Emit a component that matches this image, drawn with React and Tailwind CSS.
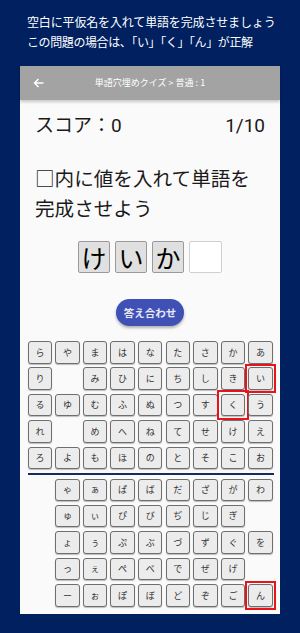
import React from 'react'

const group1 = [
  ['ら', 'や', 'ま', 'は', 'な', 'た', 'さ', 'か', 'あ'],
  ['り', '', 'み', 'ひ', 'に', 'ち', 'し', 'き', 'い'],
  ['る', 'ゆ', 'む', 'ふ', 'ぬ', 'つ', 'す', 'く', 'う'],
  ['れ', '', 'め', 'へ', 'ね', 'て', 'せ', 'け', 'え'],
  ['ろ', 'よ', 'も', 'ほ', 'の', 'と', 'そ', 'こ', 'お'],
]

const group2 = [
  ['', 'ゃ', 'ぁ', 'ぱ', 'ば', 'だ', 'ざ', 'が', 'わ'],
  ['', 'ゅ', 'ぃ', 'ぴ', 'び', 'ぢ', 'じ', 'ぎ', ''],
  ['', 'ょ', 'ぅ', 'ぷ', 'ぶ', 'づ', 'ず', 'ぐ', 'を'],
  ['', 'っ', 'ぇ', 'ぺ', 'べ', 'で', 'ぜ', 'げ', ''],
  ['', 'ー', 'ぉ', 'ぽ', 'ぼ', 'ど', 'ぞ', 'ご', 'ん'],
]

// answers get the red frame
const answers = ['い', 'く', 'ん']

const Key = ({ label }) => {
  if (!label) return <div />
  const marked = answers.includes(label)
  return (
    <div className="relative">
      <div className="h-[22.5px] flex items-center justify-center rounded-[3px] border border-[#6e6e6e] bg-[#ececec] text-[9px] text-[#333] shadow-[0_1px_1px_rgba(0,0,0,0.25)]">
        {label}
      </div>
      {marked && <div className="absolute -inset-[3.5px] border-2 border-[#e8141a] pointer-events-none" />}
    </div>
  )
}

const KeyGroup = ({ rows }) => (
  <div className="grid grid-cols-[repeat(9,24.4px)] gap-x-[3.2px] gap-y-[3.9px]">
    {rows.flat().map((k, i) => (
      <Key key={i} label={k} />
    ))}
  </div>
)

export default function App() {
  return (
    <div
      className="w-[300px] h-[633px] bg-[#002060] flex flex-col overflow-hidden"
      style={{ fontFamily: '"Noto Sans CJK JP", "Noto Sans", sans-serif' }}
    >
      <div className="pl-[27px] pt-[12px] text-white text-[12px] leading-[20px] whitespace-nowrap">
        <div className="tracking-[-0.15px]">空白に平仮名を入れて単語を完成させましょう</div>
        <div className="tracking-[-0.4px]">この問題の場合は、「い」「く」「ん」が正解</div>
      </div>

      <div className="mx-[20px] mt-[14px] h-[548px] bg-[#fafafa] flex flex-col">
        {/* app bar */}
        <div className="h-[34px] bg-[#a3a3a3] flex items-center relative shadow-[0_2px_3px_rgba(0,0,0,0.2)]">
          <svg width="12" height="12" viewBox="0 0 24 24" className="ml-[13px]" fill="none" stroke="white" strokeWidth="3">
            <path d="M21 12H4M11 4l-8 8 8 8" />
          </svg>
          <div className="absolute inset-0 flex items-center justify-center text-[9px] text-white">
            単語穴埋めクイズ &gt; 普通 : 1
          </div>
        </div>

        <div className="px-[15px] pt-[13px] flex justify-between text-[19px] leading-[26px] text-[#1a1a1a]" style={{ fontFamily: 'Roboto, "Noto Sans CJK JP", sans-serif' }}>
          <span>スコア：0</span>
          <span>1/10</span>
        </div>

        <div className="px-[15px] mt-[24px] text-[19.6px] leading-[30px] text-[#1a1a1a]">
          <div>□内に値を入れて単語を</div>
          <div>完成させよう</div>
        </div>

        <div className="mt-[18px] flex justify-center gap-[5px]">
          {['け', 'い', 'か'].map((c) => (
            <div key={c} className="w-[32px] h-[32px] flex items-center justify-center bg-[#e0e0e0] border border-[#9a9a9a] rounded-[2px] text-[25px] leading-none text-black">
              {c}
            </div>
          ))}
          <div className="w-[33px] h-[32px] bg-white border border-[#cfcfcf] rounded-[2px]" />
        </div>

        <div className="mt-[26px] flex justify-center">
          <button className="w-[68px] h-[27px] rounded-full bg-[#3f51b5] text-[10.5px] font-bold text-[#e6e8f5] shadow-[0_2px_3px_rgba(0,0,0,0.3)]">
            答え合わせ
          </button>
        </div>

        <div className="mt-[15px] pl-[7.7px]">
          <KeyGroup rows={group1} />
          <div className="mt-[4px] w-[246px] h-[1.5px] bg-[#1b2a5c]" />
          <div className="mt-[4px]">
            <KeyGroup rows={group2} />
          </div>
        </div>
      </div>
    </div>
  )
}
